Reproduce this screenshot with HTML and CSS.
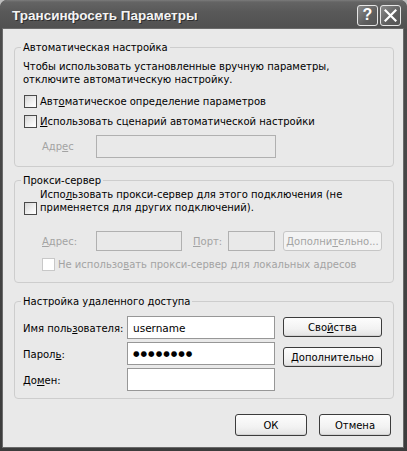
FILE: index.html
```html
<!DOCTYPE html>
<html lang="ru">
<head>
<meta charset="utf-8">
<title>Трансинфосеть Параметры</title>
<link rel="stylesheet" href="styles.css">
</head>
<body>
<div class="window">
  <div class="titlebar">
    <span class="title">Трансинфосеть Параметры</span>
    <div class="tbtns">
      <span class="tbtn help">?</span>
      <span class="tbtn close"><svg width="13" height="13" viewBox="0 0 13 13"><path d="M1.5 1.5 L11.5 11.5 M11.5 1.5 L1.5 11.5" stroke="#fff" stroke-width="2.2" stroke-linecap="square" fill="none"/></svg></span>
    </div>
  </div>
  <div class="client">
    <fieldset class="group g1">
      <legend>Автоматическая настройка</legend>
      <p class="desc">Чтобы использовать установленные вручную параметры,<br>отключите автоматическую настройку.</p>
      <div class="check r1"><span class="box"></span><span>Авт<u>о</u>матическое определение параметров</span></div>
      <div class="check"><span class="box"></span><span><u>И</u>спользовать сценарий автоматической настройки</span></div>
      <div class="row addr1"><span class="lbl dis">Адр<u>е</u>с</span><span class="field dis w180"></span></div>
    </fieldset>

    <fieldset class="group g2">
      <legend>Прокси-сервер</legend>
      <div class="check multi"><span class="box"></span><span>Испо<u>л</u>ьзовать прокси-сервер для этого подключения (не<br>применяется для других подключений).</span></div>
      <div class="row addr2">
        <span class="lbl dis"><u>А</u>дрес:</span><span class="field dis w86"></span>
        <span class="lbl dis port"><u>П</u>орт:</span><span class="field dis w47"></span>
        <span class="btn dis adv">Дополни<u>т</u>ельно...</span>
      </div>
      <div class="check small dis"><span class="box"></span><span>Не использо<u>в</u>ать прокси-сервер для локальных адресов</span></div>
    </fieldset>

    <fieldset class="group g3">
      <legend>Настройка удаленного доступа</legend>
      <div class="dial">
        <div class="form">
          <span class="flbl">Имя поль<u>з</u>ователя:</span><span class="field">username</span>
          <span class="flbl">Парол<u>ь</u>:</span><span class="field pwd">●●●●●●●●</span>
          <span class="flbl">До<u>м</u>ен:</span><span class="field"></span>
        </div>
        <div class="side">
          <span class="btn b1">Сво<u>й</u>ства</span>
          <span class="btn b2"><u>Д</u>ополнительно</span>
        </div>
      </div>
    </fieldset>

    <div class="footer">
      <span class="btn ok">ОК</span>
      <span class="btn">Отмена</span>
    </div>
  </div>
</div>
</body>
</html>
```

FILE: styles.css
```css
html, body {
  margin: 0;
  padding: 0;
  background: #bdbdbd;
}
.window {
  width: 407px;
  height: 451px;
  box-sizing: border-box;
  display: flex;
  flex-direction: column;
  background: linear-gradient(#4d4d4d, #3c3c3c);
  border-radius: 7px 7px 0 0;
  font-family: "DejaVu Sans", sans-serif;
  font-size: 10px;
  color: #000;
  overflow: hidden;
}
.titlebar {
  height: 29px;
  flex: none;
  display: flex;
  align-items: center;
  justify-content: space-between;
  padding: 0 6px 0 12px;
  background: linear-gradient(#7b7b7b 0, #646464 2px, #595959 40%, #505050 100%);
  border-radius: 7px 7px 0 0;
}
.title {
  font-family: "Liberation Sans", sans-serif;
  font-weight: bold;
  font-size: 13.5px;
  color: #f4f4f4;
  text-shadow: 1px 1px 0 #2e2e2e;
  padding-top: 1px;
}
.tbtns {
  display: flex;
  gap: 2px;
  padding-top: 1px;
}
.tbtn {
  width: 19px;
  height: 19px;
  border: 1px solid #e6e6e6;
  border-radius: 3px;
  background: linear-gradient(135deg, #8a8a8a, #5e5e5e 60%, #555);
  display: flex;
  align-items: center;
  justify-content: center;
  color: #fff;
  font-family: "Liberation Sans", sans-serif;
  font-weight: bold;
  font-size: 16px;
}
.client {
  flex: 1;
  margin: 0 4px 4px 3px;
  background: #e9e9e9;
  padding-top: 12px;
  box-shadow: 0 0 0 1px #6a6a6a;
}
.group {
  margin: 0 9px 0 11px;
  border: 1px solid #cdcdcd;
  border-radius: 4px;
  padding: 6px 8px 9px 8px;
  min-width: 0;
}
.group legend {
  padding: 0 2px;
  margin-left: -2px;
  line-height: 13px;
  color: #000;
}
.desc {
  margin: 0;
  line-height: 13px;
}
.check {
  display: flex;
  align-items: center;
  height: 20px;
  gap: 3px;
  line-height: 13px;
}
.check .box {
  flex: none;
  width: 11px;
  height: 11px;
  margin-left: 1px;
  border: 1px solid #4a4a4a;
  background: linear-gradient(135deg, #d6d6d6, #f6f6f6 70%, #fff);
}
.check.r1 { margin-top: 5px; }
.check.multi {
  height: auto;
  align-items: flex-end;
  margin-top: -5px;
}
.check.multi .box { margin-bottom: -1px; }
.check.small {
  height: 13px;
  margin-top: 7px;
}
.check.small .box {
  margin-left: 19px;
  border-color: #c8c8c8;
  background: #fff;
}
.dis { color: #a3a3a3; }
.row {
  display: flex;
  align-items: center;
}
.addr1 {
  margin-top: 4px;
  height: 22px;
}
.lbl {
  flex: none;
  margin-left: 19px;
  width: 54px;
}
.field {
  flex: none;
  box-sizing: border-box;
  height: 23px;
  border: 1px solid #979797;
  background: #fff;
  padding-left: 5px;
  display: flex;
  align-items: center;
  font-size: 10.5px;
}
.field.dis {
  background: #e9e9e9;
  border-color: #b0b0b0;
}
.w180 { width: 180px; height: 23px; }
.addr2 {
  margin-top: 17px;
  height: 20px;
}
.addr2 .field { height: 20px; }
.w86 { width: 86px; }
.w47 { width: 47px; }
.lbl.port {
  margin-left: 11px;
  width: 35px;
}
.btn {
  flex: none;
  box-sizing: border-box;
  display: flex;
  align-items: center;
  justify-content: center;
  height: 21px;
  border: 1px solid #3c3c3c;
  border-radius: 3px;
  background: linear-gradient(#fdfdfd, #f2f2f2 60%, #e3e3e3);
  box-shadow: inset 0 -1px 0 #d3d3d3;
  color: #000;
}
.btn.dis {
  border-color: #c6c6c6;
  background: #f3f3f3;
  box-shadow: none;
  color: #a3a3a3;
}
.btn.adv {
  margin-left: 8px;
  width: 99px;
  height: 20px;
}
.dial {
  display: flex;
  align-items: flex-start;
  margin-top: 2px;
}
.g2 { margin-top: 7px; }
.g3 {
  margin-top: 12px;
  padding-bottom: 7px;
}
.g2 { padding-bottom: 11px; }
.form {
  display: grid;
  grid-template-columns: 104px 148px;
  grid-auto-rows: 23px;
  row-gap: 3px;
  align-items: center;
}
.flbl { padding-top: 2px; }
.pwd {
  font-size: 7.5px;
  letter-spacing: 1px;
}
.side {
  display: flex;
  flex-direction: column;
  margin-left: 8px;
  width: 99px;
}
.side .btn { width: 99px; height: 20px; }
.b1 { margin-top: 1px; }
.b2 { margin-top: 10px; }
.footer {
  display: flex;
  justify-content: flex-end;
  gap: 12px;
  margin-top: 15px;
  padding-right: 12px;
}
.footer .btn {
  width: 72px;
  height: 22px;
}
u { text-decoration-thickness: 1px; text-underline-offset: 1px; }
```
